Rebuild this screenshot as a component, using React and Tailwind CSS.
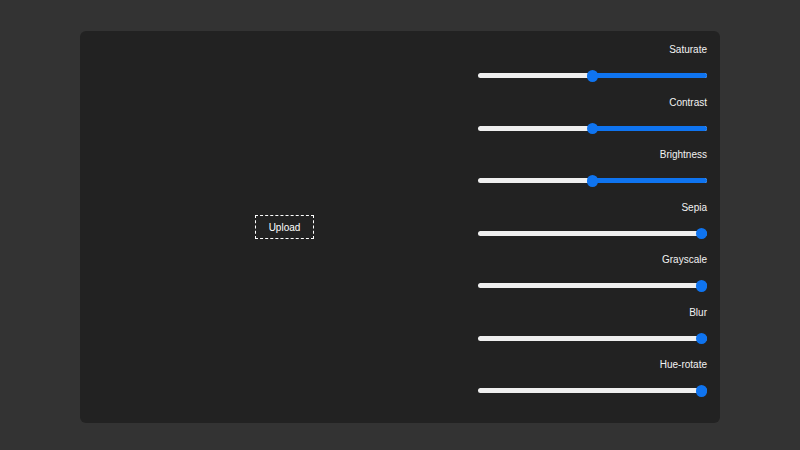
import React from "react";

const filters = [
  { name: "Saturate", value: 100, max: 200 },
  { name: "Contrast", value: 100, max: 200 },
  { name: "Brightness", value: 100, max: 200 },
  { name: "Sepia", value: 0, max: 100 },
  { name: "Grayscale", value: 0, max: 100 },
  { name: "Blur", value: 0, max: 10 },
  { name: "Hue-rotate", value: 0, max: 360 },
];

const W = 229;
const R = 5.5;

function Slider({ value, max }) {
  const f = value / max;
  const cx = W - R - f * (W - 2 * R);
  return (
    <div className="relative w-[229px] h-3 shrink-0">
      <div className="absolute left-0 right-0 top-[3.5px] h-[5px] rounded-full bg-[#efefef]" />
      <div
        className="absolute right-0 top-[3.5px] h-[5px] rounded-r-full bg-[#0f74f0]"
        style={{ left: cx }}
      />
      <div
        className="absolute w-[11.5px] h-[11.5px] rounded-full bg-[#0f74f0]"
        style={{ left: cx - 5.75, top: 0.25 }}
      />
    </div>
  );
}

export default function App() {
  return (
    <div
      className="w-[800px] h-[450px] bg-[#333333] pt-[31px] pl-[80px]"
      style={{ fontFamily: '"Liberation Sans", Arial, sans-serif' }}
    >
      <div className="w-[640px] h-[392px] bg-[#222222] rounded-[6px] flex">
        <div className="flex-1 pl-[11px] flex items-center justify-center">
          <div className="border border-dashed border-white px-[13px] py-[5.5px] text-[10px] leading-[11px] text-white">
            Upload
          </div>
        </div>
        <div className="w-[242px] pr-[13px] flex flex-col justify-center">
          {filters.map((f) => (
            <div key={f.name} className="h-[52.5px] flex flex-col items-end">
              <div className="h-3 pt-[1px] text-[10px] leading-3 text-[#f2f2f2]">{f.name}</div>
              <div className="mt-[14.5px]">
                <Slider value={f.value} max={f.max} />
              </div>
            </div>
          ))}
        </div>
      </div>
    </div>
  );
}
